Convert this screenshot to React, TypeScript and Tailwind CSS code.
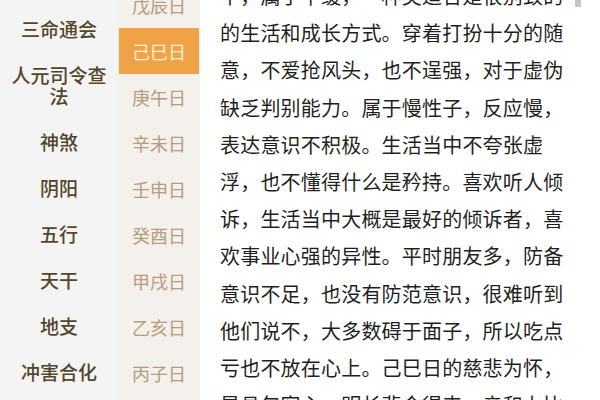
import React from "react";

const categories = [
  "八字精批",
  "三命通会",
  "人元司令查法",
  "神煞",
  "阴阳",
  "五行",
  "天干",
  "地支",
  "冲害合化",
];

const days = [
  "戊辰日",
  "己巳日",
  "庚午日",
  "辛未日",
  "壬申日",
  "癸酉日",
  "甲戌日",
  "乙亥日",
  "丙子日",
  "丁丑日",
];

const lines = [
  "中，属于平缓，一种类适合是很别致的",
  "的生活和成长方式。穿着打扮十分的随",
  "意，不爱抢风头，也不逞强，对于虚伪",
  "缺乏判别能力。属于慢性子，反应慢，",
  "表达意识不积极。生活当中不夸张虚",
  "浮，也不懂得什么是矜持。喜欢听人倾",
  "诉，生活当中大概是最好的倾诉者，喜",
  "欢事业心强的异性。平时朋友多，防备",
  "意识不足，也没有防范意识，很难听到",
  "他们说不，大多数碍于面子，所以吃点",
  "亏也不放在心上。己巳日的慈悲为怀，",
  "是具包容心，明长悲会得来，亲和力比",
];

export default function App() {
  return (
    <div
      className="relative flex h-[400px] w-[600px] overflow-hidden bg-white"
      style={{ fontFamily: '"Noto Sans CJK SC", "Noto Sans", sans-serif' }}
    >
      {/* category list */}
      <div className="w-[118px] shrink-0 bg-[#f4f4f4]">
        <div className="-mt-[41px] flex flex-col">
          {categories.map((c) => (
            <div
              key={c}
              className="flex items-center justify-center px-[10px] py-[12.5px] text-center text-[19px] font-medium leading-[21px] text-[#54462a]"
            >
              {c}
            </div>
          ))}
        </div>
      </div>

      {/* day list */}
      <div className="w-[82px] shrink-0 bg-[#f4f0eb]">
        <div className="-mt-[18px] flex flex-col">
          {days.map((d) => (
            <div
              key={d}
              className={
                d === "己巳日"
                  ? "mx-px flex h-[46px] items-center justify-center bg-[#f0a246] text-[18px] text-[#fdf1da]"
                  : "flex h-[46px] items-center justify-center text-[18px] text-[#b59d7d]"
              }
            >
              {d}
            </div>
          ))}
        </div>
      </div>

      {/* article */}
      <div className="flex-1 pl-[20px]">
        <div className="-mt-[23px]">
          {lines.map((l, i) => (
            <div
              key={i}
              className="whitespace-nowrap text-[20px] leading-[37.2px] tracking-[0.2px] text-[#1f1f1f]"
            >
              {l}
            </div>
          ))}
        </div>
      </div>

      <div className="absolute right-[19px] top-0 h-[7px] w-[6px] bg-[#c4c4c4]" />
    </div>
  );
}
